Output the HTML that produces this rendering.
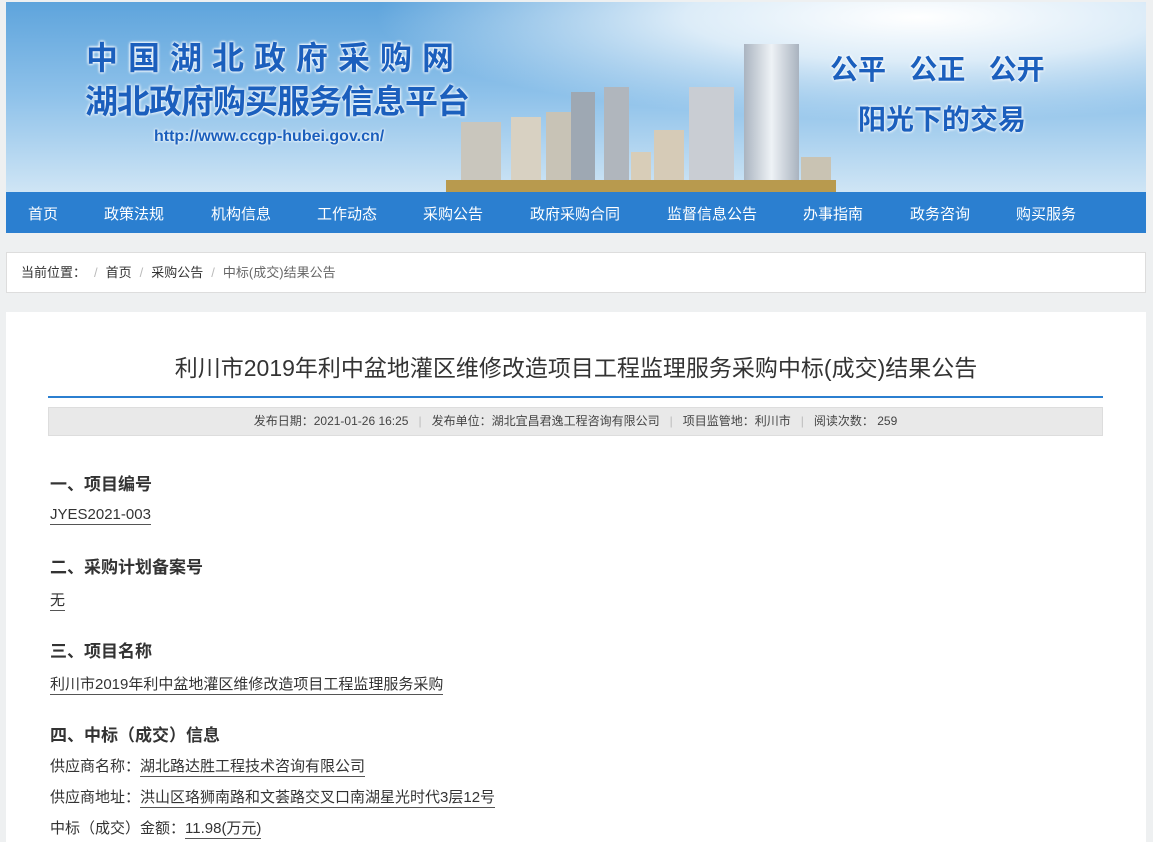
<!DOCTYPE html>
<html><head><meta charset="utf-8"><style>
*{margin:0;padding:0;box-sizing:border-box}
body{width:1153px;height:838px;overflow:hidden;background:#eef0f1;font-family:"Liberation Sans","Noto Sans CJK SC",sans-serif;color:#333;position:relative}
.banner{position:absolute;left:6px;top:2px;width:1140px;height:190px;overflow:hidden;background:radial-gradient(ellipse at 80% 8%,#ffffff 0%,#dcecf8 18%,transparent 42%),linear-gradient(180deg,#5ea4dc 0%,#8fc2ea 50%,#cfe5f5 100%)}
.b{position:absolute;bottom:0}
.t1{position:absolute;left:80px;top:36px;font-size:32px;line-height:40px;font-weight:bold;color:#1b5fbd;letter-spacing:10px;text-shadow:0 0 3px #fff,0 0 3px #fff,0 0 2px #fff}
.t2{position:absolute;left:79px;top:80px;font-size:33px;line-height:40px;font-weight:bold;color:#1b5fbd;letter-spacing:-1px;text-shadow:0 0 3px #fff,0 0 3px #fff}
.t3{position:absolute;left:148px;top:125px;font-size:16px;line-height:20px;color:#1b5fbd;font-weight:bold;text-shadow:0 0 3px #fff,0 0 2px #fff}
.t4{position:absolute;left:824px;top:48px;font-size:28px;line-height:40px;font-weight:bold;color:#1b5fbd;text-shadow:0 0 3px #fff,0 0 3px #fff}
.t5{position:absolute;left:852px;top:98px;font-size:28px;line-height:40px;font-weight:bold;color:#1b5fbd;text-shadow:0 0 3px #fff,0 0 3px #fff}
.nav{position:absolute;left:6px;top:192px;width:1140px;height:41px;background:#2b7fd0}
.nav span{position:absolute;top:11px;font-size:15px;color:#fff}
.crumb{position:absolute;left:6px;top:252px;width:1140px;height:41px;background:#fff;border:1px solid #ddd;font-size:13px;line-height:39px;padding-left:14px;color:#333}
.crumb i{font-style:normal;color:#bbb;margin:0 8px}
.main{position:absolute;left:6px;top:312px;width:1140px;height:530px;background:#fff}
h1{position:absolute;left:0;width:1140px;top:37px;text-align:center;font-size:23px;font-weight:normal;color:#333}
.line{position:absolute;left:42px;top:84px;width:1055px;height:2px;background:#2b7fd0}
.meta{position:absolute;left:42px;top:95px;width:1055px;height:29px;background:#e9e9e9;border:1px solid #ddd;font-size:12px;text-align:center;line-height:27px;color:#444}
.meta i{font-style:normal;color:#bbb;margin:0 10px}
.c{position:absolute;left:44px;font-size:15px;color:#333}
.h{font-weight:bold;font-size:17px}
u{text-decoration:none;border-bottom:1px solid #555;padding-bottom:1px}
</style></head><body>
<div class="banner">
<div class="b" style="left:455px;width:40px;height:70px;background:#c9c6bd"></div>
<div class="b" style="left:505px;width:30px;height:75px;background:#d8d1c2"></div>
<div class="b" style="left:540px;width:26px;height:80px;background:#c8c3b6"></div>
<div class="b" style="left:565px;width:24px;height:100px;background:#9ea8b3"></div>
<div class="b" style="left:598px;width:25px;height:105px;background:#b0b6bd"></div>
<div class="b" style="left:625px;width:20px;height:40px;background:#d8cdb8"></div>
<div class="b" style="left:648px;width:30px;height:62px;background:#d6cbb7"></div>
<div class="b" style="left:683px;width:45px;height:105px;background:#c9cdd3"></div>
<div class="b" style="left:738px;width:55px;height:148px;background:linear-gradient(90deg,#aab4c0,#eef2f6,#a9b3bf)"></div>
<div class="b" style="left:795px;width:30px;height:35px;background:#c9c3b3"></div>
<div class="b" style="left:440px;width:390px;height:12px;background:#b89a4e"></div>
<div class="t1">中国湖北政府采购网</div>
<div class="t2">湖北政府购买服务信息平台</div>
<div class="t3">http://www.ccgp-hubei.gov.cn/</div>
<div class="t4">公平&nbsp;&nbsp;&nbsp;公正&nbsp;&nbsp;&nbsp;公开</div>
<div class="t5">阳光下的交易</div>
</div>
<div class="nav">
<span style="left:22px">首页</span><span style="left:98px">政策法规</span><span style="left:205px">机构信息</span><span style="left:311px">工作动态</span><span style="left:417px">采购公告</span><span style="left:524px">政府采购合同</span><span style="left:661px">监督信息公告</span><span style="left:797px">办事指南</span><span style="left:904px">政务咨询</span><span style="left:1010px">购买服务</span>
</div>
<div class="crumb">当前位置：<i>/</i>首页<i>/</i>采购公告<i>/</i><span style="color:#666">中标(成交)结果公告</span></div>
<div class="main">
<h1>利川市2019年利中盆地灌区维修改造项目工程监理服务采购中标(成交)结果公告</h1>
<div class="line"></div>
<div class="meta">发布日期：2021-01-26 16:25<i>|</i>发布单位：湖北宜昌君逸工程咨询有限公司<i>|</i>项目监管地：利川市<i>|</i>阅读次数： 259</div>
<div class="c h" style="top:158px">一、项目编号</div>
<div class="c" style="top:194px"><u>JYES2021-003</u></div>
<div class="c h" style="top:241px">二、采购计划备案号</div>
<div class="c" style="top:277px"><u>无</u></div>
<div class="c h" style="top:325px">三、项目名称</div>
<div class="c" style="top:361px"><u>利川市2019年利中盆地灌区维修改造项目工程监理服务采购</u></div>
<div class="c h" style="top:409px">四、中标（成交）信息</div>
<div class="c" style="top:443px">供应商名称：<u>湖北路达胜工程技术咨询有限公司</u></div>
<div class="c" style="top:474px">供应商地址：<u>洪山区珞狮南路和文荟路交叉口南湖星光时代3层12号</u></div>
<div class="c" style="top:505px">中标（成交）金额：<u>11.98(万元)</u></div>
</div>
</body></html>
